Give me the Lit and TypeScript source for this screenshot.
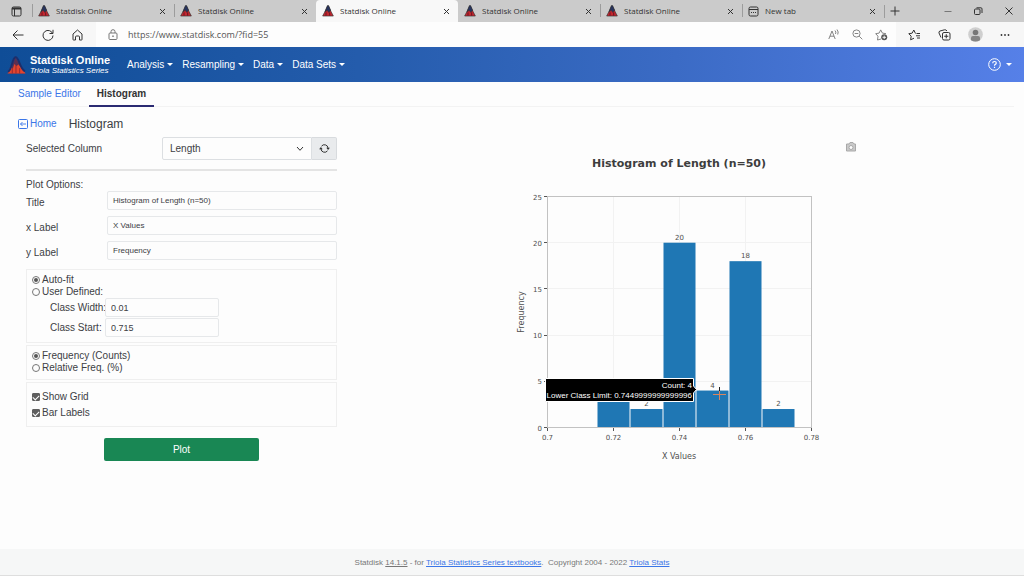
import { LitElement, html, svg, css } from "lit";
import { customElement, property } from "lit/decorators.js";

const peaks = svg`
  <path d="M8 1.5 L13 10.5 L17 17 H2 L5 9 Z" fill="#5b2f52"/>
  <path d="M0.500 17 L3.500 10.500 L5.500 12.500 L7 8 L9 10 L11 8.500 L13 11 L15 12.500 L17.500 17 Z" fill="#e2452f"/>
  <path d="M1 15.500 C5 13 4.500 3 8 1.600 C11.500 1 11.500 12 17 15" fill="none" stroke="#1c2f6c" stroke-width="1.800"/>
  <path d="M5 12 V17 M8.500 9 V17 M12 12 V17" stroke="#8c2430" stroke-width="0.800"/>`;

@customElement("browser-chrome")
export class BrowserChrome extends LitElement {
  static styles = css`
    :host { display: block; font-family: "Open Sans", "Noto Sans", sans-serif; color: #333; }
    button { font: inherit; color: inherit; background: none; border: 0; padding: 0; display: flex; align-items: center; }
    svg { display: block; flex: none; fill: none; stroke: currentColor; }
    .strip { display: flex; align-items: center; height: 22px; background: #cbcbcb; font-size: 8px; }
    .menu { width: 32px; height: 22px; justify-content: center; box-sizing: border-box; flex: none; }
    .tab { flex: 0 1 142px; min-width: 0; height: 22px; box-sizing: border-box; display: flex; align-items: center; gap: 6px; padding: 0 8px 0 6px; position: relative; }
    .tab::before { content: ""; width: 1px; height: 13px; background: #9c9c9c; position: absolute; left: 0; top: 4px; }
    .tab.active { background: #f8f8f8; border-radius: 4px 4px 0 0; }
    .tab.active::before, .tab.active + .tab::before { display: none; }
    .tab span { flex: 1; white-space: nowrap; overflow: hidden; }
    .plus { padding-left: 5px; border-left: 1px solid #9c9c9c; height: 13px; }
    .window { margin-left: auto; display: flex; gap: 22px; padding-right: 11px; }
    .bar { display: flex; height: 25px; background: #f7f7f7; align-items: center; }
    .nav { display: flex; gap: 18px; padding: 0 13px 0 12px; color: #333; }
    .address { flex: 1; display: flex; align-items: center; align-self: stretch; background: #fdfdfd; padding: 0 8px 0 12px; gap: 10px; color: #777; }
    .address input { flex: 1; min-width: 0; border: 0; background: none; padding: 0; font: 9px "Open Sans", sans-serif; color: #555; outline: none; }
    .inside, .tools { display: flex; align-items: center; gap: 12px; }
    .tools { gap: 17px; padding: 0 14px 0 12px; }
  `;

  private tabs = ["Statdisk Online", "Statdisk Online", "Statdisk Online", "Statdisk Online", "Statdisk Online", "New tab"];

  render() {
    return html`
      <div class="strip">
        <button class="menu" aria-label="Tab actions"><svg width="11" height="11" viewBox="0 0 11 11"><rect x="1" y="1" width="9" height="9" rx="1.500"/><path d="M1 2.500H10" stroke-width="2"/><path d="M3.500 3V10"/></svg></button>
        ${this.tabs.map((name, i) => html`
          <div class="tab ${i === 2 ? "active" : ""}">
            ${i === 5
              ? html`<svg width="11" height="11" viewBox="0 0 11 11"><rect x="1" y="1" width="9" height="9" rx="1.500"/><path d="M1 3.500H10M3 6.500H4M5 6.500H6M7 6.500H8"/></svg>`
              : html`<svg width="12" height="12" viewBox="0 0 18 18" stroke="none">
                  <path d="M9 1 L17 16.500 H1 Z" fill="#c3262f"/><path d="M8 1 L10 1 L13 8 L10 11 L8 8 L4.500 10 Z" fill="#27345f"/>
                  <path d="M6 11 V16 M11.500 11 V16" stroke="#6d1420" stroke-width="1.500"/></svg>`}
            <span>${name}</span>
            <button aria-label="Close tab"><svg width="7" height="7" viewBox="0 0 7 7"><path d="M1 1L6 6M6 1L1 6"/></svg></button>
          </div>`)}
        <button class="plus" aria-label="New tab"><svg width="10" height="10" viewBox="0 0 10 10"><path d="M5 0.500V9.500M0.500 5H9.500"/></svg></button>
        <div class="window">
          <button aria-label="Minimize"><svg width="8" height="8" viewBox="0 0 8 8"><path d="M0.500 4.500H7.500" stroke="#777"/></svg></button>
          <button aria-label="Restore"><svg width="9" height="8" viewBox="0 0 9 8"><rect x="0.500" y="2" width="5.500" height="5.500" rx="1"/><path d="M2.500 0.800H7Q8 0.800 8 2V6"/></svg></button>
          <button aria-label="Close"><svg width="8" height="8" viewBox="0 0 8 8"><path d="M0.500 0.500L7.500 7.500M7.500 0.500L0.500 7.500"/></svg></button>
        </div>
      </div>
      <div class="bar">
        <div class="nav">
          <button aria-label="Back"><svg width="12" height="12" viewBox="0 0 12 12"><path d="M11.500 6H1M5.500 1.500L1 6L5.500 10.500"/></svg></button>
          <button aria-label="Refresh"><svg width="12" height="12" viewBox="0 0 12 12"><path d="M10.800 5A5 5 0 1 0 11 6.500M11 0.800V4.500H7.500"/></svg></button>
          <button aria-label="Home"><svg width="11" height="12" viewBox="0 0 11 12"><path d="M1 5L5.500 1L10 5V10.500Q10 11 9.500 11H7.500V8Q7.500 7 6.500 7H4.500Q3.500 7 3.500 8V11H1.500Q1 11 1 10.500Z"/></svg></button>
        </div>
        <div class="address">
          <svg width="10" height="11" viewBox="0 0 10 11"><rect x="1" y="4" width="8" height="6.500" rx="1"/><path d="M3 4V2.500Q3 0.700 5 0.700Q7 0.700 7 2.500V4"/><circle cx="5" cy="7.200" r="0.500"/></svg>
          <input aria-label="Address" .value=${"https://www.statdisk.com/?fid=55"}>
          <div class="inside">
            <button aria-label="Read aloud"><svg width="12" height="11" viewBox="0 0 12 11" stroke-width="0.900"><path d="M0.800 10L4 2L7.200 10M2 7.200H6M7 1.500Q8.500 3 7.500 5M9 0.500Q11 3 9.700 5.500"/></svg></button>
            <button aria-label="Zoom"><svg width="11" height="11" viewBox="0 0 11 11" stroke-width="0.900"><circle cx="4.500" cy="4.500" r="3.600"/><path d="M2.700 4.500H6.300M7.200 7.200L10.300 10.300"/></svg></button>
            <button aria-label="Add to favorites"><svg width="13" height="12" viewBox="0 0 13 12"><path d="M6 10L2.500 11L3 7.200L0.700 4.700L4.100 4.100L5.700 0.900L7.400 4.100L11 4.700" stroke-width="0.900"/><circle cx="9.200" cy="8.300" r="3" fill="#555" stroke="none"/><path d="M7.500 8.300H11M9.200 6.600V10" stroke="#fff" stroke-width="0.900"/></svg></button>
          </div>
        </div>
        <div class="tools">
          <button aria-label="Favorites"><svg width="13" height="12" viewBox="0 0 13 12"><path d="M7.500 4.500L5.800 1L4.100 4.200L0.800 4.700L3.200 7.200L2.600 10.800L6 9.200M8.500 4.500H12M8 6.800H12M9 9H12"/></svg></button>
          <button aria-label="Collections"><svg width="13" height="12" viewBox="0 0 13 12"><rect x="4.500" y="3.500" width="7.500" height="7.500" rx="1.500"/><path d="M8.250 5.200V9.300M6.200 7.250H10.300M3 8.500L1 4Q0.500 2.500 2 2L6.500 0.800Q8 0.500 9 2"/></svg></button>
          <button aria-label="Profile"><svg width="15" height="15" viewBox="0 0 15 15"><g stroke="none"><circle cx="7.500" cy="7.500" r="7.300" fill="#cfcfcf"/><circle cx="7.500" cy="5.500" r="2.800" fill="#777"/><path d="M3 13.200V10.800Q3 9 5 9H10Q12 9 12 10.800V13.200Q7.500 16 3 13.200Z" fill="#858585"/></g></svg></button>
          <button aria-label="Settings"><svg width="10" height="4" viewBox="0 0 10 4"><g stroke="none" fill="#333"><circle cx="1.500" cy="2" r="0.900"/><circle cx="5" cy="2" r="0.900"/><circle cx="8.500" cy="2" r="0.900"/></g></svg></button>
        </div>
      </div>`;
  }
}

@customElement("histogram-plot")
export class HistogramPlot extends LitElement {
  static styles = css`
    :host { display: block; }
    .plot { display: block; max-width: 100%; font-family: "DejaVu Sans", Verdana, sans-serif; fill: #4f4f4f; }
    .title { font-size: 11px; font-weight: 700; fill: #3d3d3d; }
    .tick { font-size: 7px; }
    .axis { font-size: 8px; }
    .mid { text-anchor: middle; }
    .end { text-anchor: end; }
    .grid { stroke: #f2f2f2; fill: none; }
    .frame { stroke: #c2c2c2; fill: none; }
    .mark { stroke: #555; }
    .bar { fill: #1f77b4; }
    .tip { fill: #000; stroke: #fff; }
    .tiptext { font: 8px "Liberation Sans", Arial, sans-serif; fill: #fff; text-anchor: end; }
    .cross { stroke: #d9855f; stroke-width: 1; }
    .crosstop { stroke: #222; stroke-width: 1; }
  `;

  @property({ attribute: false }) bins = [
    { start: 0.715, count: 4 }, { start: 0.725, count: 2 }, { start: 0.735, count: 20 },
    { start: 0.745, count: 4 }, { start: 0.755, count: 18 }, { start: 0.765, count: 2 },
  ];

  private x = (v: number) => 48.5 + (v - 0.7) * 3300;
  private y = (v: number) => 291.5 - v * 9.24;

  render() {
    const { x, y } = this;
    return html`
      <svg class="plot" width="360" height="336" viewBox="0 0 360 336" role="img" aria-label="Histogram of Length (n=50)">
        <g fill="none" stroke="#a9a9a9"><path d="M347.500 8H350L351 6.500H354L355 8H356.500V15H347.500Z" fill="#c9c9c9" /><circle cx="352" cy="11.500" r="2" fill="#fdfdfd"/></g>
        <text class="title mid" x="180" y="31">Histogram of Length (n=50)</text>
        ${[0.72, 0.74, 0.76].map((v) => svg`<path class="grid" d="M${x(v)} 60.500V291.500"/>`)}
        ${[5, 10, 15, 20].map((v) => svg`<path class="grid" d="M48.500 ${Math.floor(y(v)) + 0.5}H312.500"/>`)}
        ${this.bins.map((b) => svg`
          <rect class="bar" x=${x(b.start) + 0.5} y=${y(b.count)} width="32" height=${291.5 - y(b.count)}/>
          <text class="tick mid" x=${x(b.start + 0.005)} y=${y(b.count) - 3}>${b.count}</text>`)}
        <rect class="frame" x="48.500" y="60.500" width="264" height="231"/>
        ${[0, 5, 10, 15, 20, 25].map((v) => svg`
          <path class="mark" d="M45 ${Math.floor(y(v)) + 0.5}H48"/>
          <text class="tick end" x="43" y=${y(v) + 3}>${v}</text>`)}
        ${[0.7, 0.72, 0.74, 0.76, 0.78].map((v) => svg`
          <path class="mark" d="M${x(v)} 292V295"/>
          <text class="tick mid" x=${x(v)} y="304">${v}</text>`)}
        <text class="axis mid" x="180" y="323">X Values</text>
        <text class="axis mid" transform="translate(25 176) rotate(-90)">Frequency</text>
        <path class="tip" d="M46.500 242.500H194.500V250L197.500 253.500L194.500 257V265.500H46.500Z"/>
        <text class="tiptext" x="193" y="252">Count: 4</text>
        <text class="tiptext" x="193" y="262">Lower Class Limit: 0.7449999999999996</text>
        <path class="cross" d="M220.500 254V264M214 258.500H227"/><path class="crosstop" d="M220.500 251V255"/>
      </svg>`;
  }
}

@customElement("app-root")
export class AppRoot extends LitElement {
  static styles = css`
    :host { display: flex; flex-direction: column; min-height: 100vh; background: #fdfdfd; color: #3c4044; font: 10px/12px "Liberation Sans", Arial, sans-serif; }
    * { box-sizing: border-box; }
    button, input, select { font: inherit; color: inherit; margin: 0; }
    a { color: #3b76e8; text-decoration: none; }
    svg { display: block; flex: none; }
    .header { display: flex; align-items: center; height: 35px; padding: 0 12px 0 7px; background: linear-gradient(90deg, #0f4d97, #245cac 35%, #3b6bc5 66%, #5680e8); color: #fff; }
    .brand { display: flex; align-items: center; gap: 4px; width: 120px; color: #fff; }
    .name { display: block; font-size: 11px; font-weight: 700; line-height: 11px; white-space: nowrap; }
    .series { display: block; font-size: 8px; font-style: italic; line-height: 9px; }
    .menus { display: flex; gap: 9px; flex: 1; }
    .menu { display: flex; align-items: center; gap: 3px; background: none; border: 0; padding: 0; white-space: nowrap; }
    .menu::after { content: ""; border: 3px solid transparent; border-top-color: currentColor; border-bottom: 0; }
    .help { gap: 5px; }
    .tabs { display: flex; height: 25px; margin: 0 10px; border-bottom: 1px solid #f3f3f3; }
    .link { padding: 6px 8px 0; height: 25px; }
    .link.on { color: #333; font-weight: 700; border-bottom: 2px solid #2b2a72; }
    .main { display: flex; flex: 1; }
    .side { width: 337px; padding-top: 9px; flex: none; }
    .crumb { display: flex; align-items: center; padding-left: 18px; height: 16px; }
    .home { display: flex; align-items: center; gap: 2px; }
    h1 { font-size: 12px; line-height: 16px; font-weight: 400; margin: 0 0 0 12px; }
    .form { padding: 5px 0 0 26px; }
    .column { display: flex; align-items: center; }
    .column label { width: 136px; }
    .pick { position: relative; flex: 1; display: flex; }
    .pick svg { position: absolute; right: 8px; top: 9px; pointer-events: none; }
    select { appearance: none; width: 100%; height: 23px; border: 1px solid #dcdfe2; background: #fdfdfd; padding: 0 7px; border-radius: 2px 0 0 2px; }
    .reload { width: 25px; height: 23px; border: 1px solid #d8dbde; border-left: 0; background: #e9ebed; border-radius: 0 2px 2px 0; padding: 0; display: grid; place-items: center; }
    hr { border: 0; height: 2px; background: #e4e4e4; margin: 9px 0 8px; }
    p { margin: 0; }
    .fields { display: grid; grid-template-columns: 81px 1fr; gap: 6px 0; }
    .fields label { padding-top: 6px; }
    .text { height: 19px; width: 100%; border: 1px solid #e6e8ea; border-radius: 2px; background: #fdfdfd; padding: 0 5px; font-size: 8px; }
    fieldset { border: 1px solid #efefef; margin: 0; padding: 4px 5px 5px; min-width: 0; }
    .first { margin-top: 9px; }
    .gap { margin-top: 2px; }
    .choice { display: flex; align-items: center; gap: 2px; height: 12px; }
    .choice input { appearance: none; width: 8px; height: 8px; border: 1px solid #777; background: #fdfdfd; display: grid; place-items: center; flex: none; }
    .choice input[type="radio"] { border-radius: 50%; }
    .choice input[type="radio"]:checked::after { content: ""; width: 4px; height: 4px; border-radius: 50%; background: #555; }
    .choice input[type="checkbox"] { border-radius: 1px; }
    .choice input[type="checkbox"]:checked { background: #5f5f5f; border-color: #5f5f5f; }
    .choice input[type="checkbox"]:checked::after { content: ""; width: 5px; height: 3px; border: solid #fff; border-width: 0 0 1px 1px; transform: rotate(-45deg); }
    .checks { display: grid; gap: 4px; padding: 8px 5px 7px; }
    .custom { display: grid; grid-template-columns: 55px 114px; align-items: center; padding: 0 0 0 18px; gap: 1px 0; }
    .custom label { white-space: nowrap; }
    .custom .text { font-size: 9px; }
    .go { display: block; width: 155px; height: 23px; margin: 11px auto 0 78px; border: 0; border-radius: 2px; background: #198754; color: #fff; }
    .chart { flex: 1; min-width: 0; display: flex; justify-content: center; align-items: flex-start; padding: 29px 8px 0 5px; }
    .footer { height: 27px; background: #f6f7f7; border-bottom: 1px solid #dedede; text-align: center; font-size: 8px; line-height: 27px; color: #777; }
    .footer a { text-decoration: underline; }
    abbr { text-decoration: underline; }
  `;

  render() {
    return html`
      <browser-chrome></browser-chrome>
      <header class="header">
        <a class="brand" href="#"><svg width="19" height="20" viewBox="0 0 18 18">${peaks}</svg>
          <span><span class="name">Statdisk Online</span><span class="series">Triola Statistics Series</span></span></a>
        <nav class="menus">${["Analysis", "Resampling", "Data", "Data Sets"].map((m) => html`<button class="menu">${m}</button>`)}</nav>
        <button class="menu help" aria-label="Help"><svg width="13" height="13" viewBox="0 0 13 13" fill="none" stroke="#fff"><circle cx="6.500" cy="6.500" r="5.800"/><path d="M4.700 5.200Q4.700 3.500 6.500 3.500Q8.300 3.500 8.300 5Q8.300 6 7 6.600Q6.500 6.900 6.500 7.700M6.500 8.800V9.900" stroke-width="1.200"/></svg></button>
      </header>
      <nav class="tabs"><a class="link" href="#">Sample Editor</a><a class="link on" href="#">Histogram</a></nav>
      <main class="main">
        <section class="side">
          <div class="crumb">
            <a class="home" href="#"><svg width="10" height="10" viewBox="0 0 10 10" fill="none" stroke="#3b76e8"><rect x="0.500" y="0.500" width="9" height="9" rx="1"/><path d="M8 5H2.500M4.500 3L2.500 5L4.500 7" stroke-width="0.900"/></svg>Home</a>
            <h1>Histogram</h1>
          </div>
          <div class="form">
            <div class="column">
              <label for="col">Selected Column</label>
              <div class="pick"><select id="col"><option>Length</option></select><svg width="8" height="6" viewBox="0 0 8 6" fill="none" stroke="#333"><path d="M1 1L4 4.300L7 1"/></svg></div>
              <button class="reload" aria-label="Reload columns"><svg width="11" height="9" viewBox="0 0 11 9" fill="none" stroke="#333"><path d="M2.500 2.200A3.600 3.600 0 0 1 9 4M8.500 6.800A3.600 3.600 0 0 1 2 5"/><path d="M7.300 3.700H10.900L9.100 6ZM0.100 5.300H3.700L1.900 3Z" fill="#333" stroke="none"/></svg></button>
            </div>
            <hr>
            <p>Plot Options:</p>
            <div class="fields">
              <label for="t">Title</label><input class="text" id="t" .value=${"Histogram of Length (n=50)"}>
              <label for="x">x Label</label><input class="text" id="x" .value=${"X Values"}>
              <label for="y">y Label</label><input class="text" id="y" .value=${"Frequency"}>
            </div>
            <fieldset class="first" aria-label="Classes">
              <label class="choice"><input type="radio" name="fit" checked>Auto-fit</label>
              <label class="choice"><input type="radio" name="fit">User Defined:</label>
              <div class="custom">
                <label for="w">Class Width:</label><input class="text" id="w" .value=${"0.01"}>
                <label for="s">Class Start:</label><input class="text" id="s" .value=${"0.715"}>
              </div>
            </fieldset>
            <fieldset class="gap" aria-label="Scale">
              <label class="choice"><input type="radio" name="freq" checked>Frequency (Counts)</label>
              <label class="choice"><input type="radio" name="freq">Relative Freq. (%)</label>
            </fieldset>
            <fieldset class="gap checks" aria-label="Display">
              <label class="choice"><input type="checkbox" checked>Show Grid</label>
              <label class="choice"><input type="checkbox" checked>Bar Labels</label>
            </fieldset>
            <button class="go">Plot</button>
          </div>
        </section>
        <section class="chart"><histogram-plot></histogram-plot></section>
      </main>
      <footer class="footer">Statdisk <abbr>14.1.5</abbr> - for <a href="#">Triola Statistics Series textbooks</a>. &nbsp;Copyright 2004 - 2022 <a href="#">Triola Stats</a></footer>`;
  }
}
